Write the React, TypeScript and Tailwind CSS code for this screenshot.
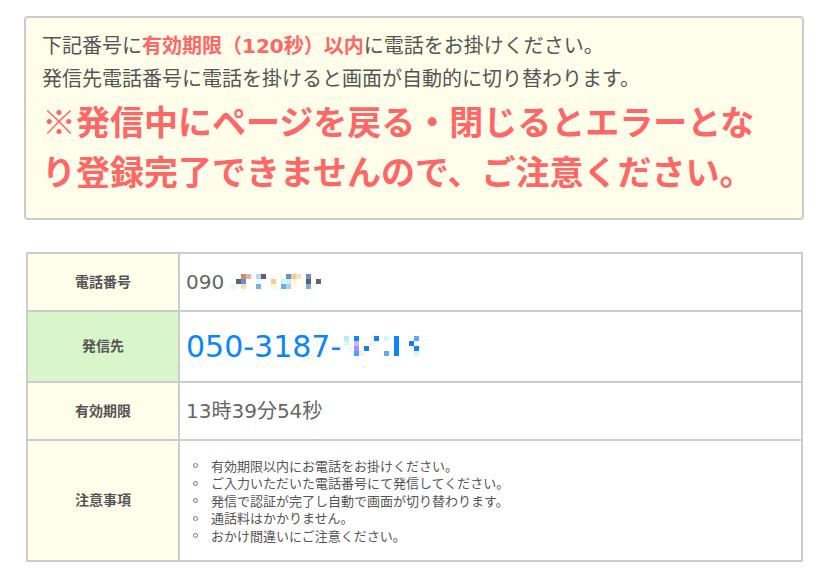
type Cell = string | null;

const mosaicA: Cell[][] = [
  [null, null, "bg-[#d08a68]", "bg-[#e8b0b0]", null, "bg-[#b0e0f8]", "bg-[#606068]", null, null, null, null, "bg-[#6890d0]", "bg-[#f8c898]", "bg-[#f8e0b0]", null, "bg-[#6890d0]", null, null],
  [null, "bg-[#606078]", "bg-[#6890d0]", null, null, "bg-[#eef6ff]", null, null, "bg-[#f8c890]", null, "bg-[#c8f8f8]", "bg-[#c8f0f8]", "bg-[#fff8d8]", null, null, "bg-[#606060]", null, "bg-[#606078]"],
  ["bg-[#e0f8f8]", null, "bg-[#f8e0b0]", null, null, "bg-[#78b0e0]", null, null, "bg-[#fff8d8]", null, "bg-[#78a8e0]", "bg-[#a8d0f0]", "bg-[#fffce0]", null, null, "bg-[#78b0e0]", null, null],
];

const mosaicB: Cell[][] = [
  ["bg-[#b0eef8]", null, "bg-[#0a84ff]", null, null, null, "bg-[#0a84ff]", null, "bg-[#d0fafa]", null, "bg-[#0a84ff]", null, null, null, "bg-[#50b0f8]"],
  ["bg-[#d8f8fa]", null, "bg-[#d8b0f8]", null, null, "bg-[#fbeefb]", null, null, null, null, "bg-[#0a84ff]", null, null, "bg-[#1080f0]", null],
  [null, null, "bg-[#b090f0]", null, "bg-[#1080f0]", null, null, null, null, null, "bg-[#0a84ff]", null, null, null, "bg-[#0a84ff]"],
  [null, null, "bg-[#40a8f8]", "bg-[#fbe8f8]", null, null, null, null, "bg-[#50b0f0]", null, "bg-[#0a84ff]", null, null, null, "bg-[#d0fafa]"],
];

function Mosaic({ rows, className }: { rows: Cell[][]; className?: string }) {
  return (
    <span className={`inline-flex flex-col ${className ?? ""}`}>
      {rows.map((row, i) => (
        <span key={i} className="flex">
          {row.map((c, j) => (
            <span key={j} className={`block h-[5px] w-[5px] ${c ?? ""}`} />
          ))}
        </span>
      ))}
    </span>
  );
}

const notes = [
  "有効期限以内にお電話をお掛けください。",
  "ご入力いただいた電話番号にて発信してください。",
  "発信で認証が完了し自動で画面が切り替わります。",
  "通話料はかかりません。",
  "おかけ間違いにご注意ください。",
];

function Label({ children, green }: { children: React.ReactNode; green?: boolean }) {
  return (
    <div
      className={`flex items-center justify-center text-[14px] font-bold text-[#555555] ${
        green ? "bg-[#d9f6cb]" : "bg-[#fffeea]"
      }`}
    >
      {children}
    </div>
  );
}

export default function App() {
  return (
    <div className="min-h-screen bg-white pl-[24px] pt-[16px] font-['DejaVu_Sans','Noto_Sans_CJK_JP',sans-serif] text-[#555555]">
      {/* Warning box */}
      <div className="w-[780px] rounded-[4px] border-2 border-[#cccccc] bg-[#fffeea] pb-[22px] pl-[16px] pr-[16px] pt-[12px]">
        <p className="text-[20px] leading-[33px]">
          下記番号に
          <span className="font-bold text-[#ff6666]">有効期限（120秒）以内</span>
          に電話をお掛けください。
        </p>
        <p className="text-[20px] leading-[33px]">発信先電話番号に電話を掛けると画面が自動的に切り替わります。</p>
        <p className="font-['Noto_Sans_CJK_JP',sans-serif] text-[34px] font-bold leading-[50px] text-[#ff6666]">
          ※発信中にページを戻る・閉じるとエラーとな
          <br />
          り登録完了できませんので、ご注意ください。
        </p>
      </div>

      {/* Detail table */}
      <div className="ml-[2px] mt-[32px] grid w-[777px] grid-cols-[150px_1fr] grid-rows-[56px_69px_56px_119px] gap-[2px] bg-[#cccccc] p-[2px]">
        <Label>電話番号</Label>
        <div className="flex items-center bg-white pl-[6px]">
          <span className="text-[20px] text-[#666666]">090</span>
          <Mosaic rows={mosaicA} className="ml-[7px] mt-[-1px]" />
        </div>

        <Label green>発信先</Label>
        <div className="flex items-center bg-white pl-[6px]">
          <span className="text-[30px] leading-none text-[#0b85ff]">050-3187-</span>
          <Mosaic rows={mosaicB} className="ml-[3px] mt-[-2px]" />
        </div>

        <Label>有効期限</Label>
        <div className="flex items-center bg-white pl-[6px]">
          <span className="text-[20px] text-[#666666]">13時39分54秒</span>
        </div>

        <Label>注意事項</Label>
        <div className="flex items-center bg-white pl-[13px]">
          <ul className="font-['Noto_Sans_CJK_JP',sans-serif] text-[13px] leading-[17.5px] text-[#555555]">
            {notes.map((n) => (
              <li key={n} className="flex items-center">
                <span className="mr-[13px] block h-[5px] w-[5px] rounded-full border border-[#777777]" />
                {n}
              </li>
            ))}
          </ul>
        </div>
      </div>
    </div>
  );
}
